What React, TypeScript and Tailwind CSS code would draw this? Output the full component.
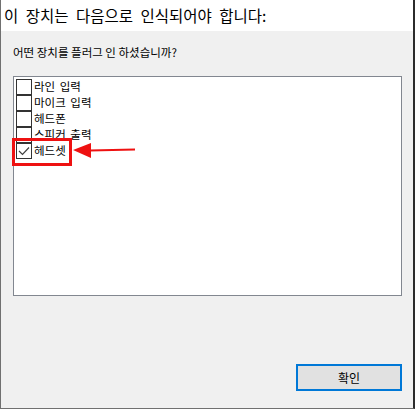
const items = [
  { label: "라인 입력", checked: false },
  { label: "마이크 입력", checked: false },
  { label: "헤드폰", checked: false },
  { label: "스피커 출력", checked: false },
  { label: "헤드셋", checked: true },
];

const font = { fontFamily: '"Noto Sans CJK KR", "Noto Sans", sans-serif' };

function CheckBox({ checked }: { checked: boolean }) {
  return (
    <div className="w-4 h-4 border border-[#333333] bg-white flex items-center justify-center shrink-0">
      {checked && (
        <svg width="12" height="10" viewBox="0 0 12 10">
          <path d="M1 5 L4.5 8.5 L11 1.5" fill="none" stroke="#404040" strokeWidth="1.2" />
        </svg>
      )}
    </div>
  );
}

export default function App() {
  return (
    <div
      className="w-[415px] h-[409px] flex flex-col bg-[#f0f0f0] border-l border-b border-l-[#707070] border-b-[#707070] border-r-2 border-r-[#2b2b2b] text-black"
      style={font}
    >
      {/* Title */}
      <div className="h-[31px] bg-white pl-[3px] flex items-center">
        <span className="text-[15.5px] leading-none [word-spacing:4px]">
          이 장치는 다음으로 인식되어야 합니다:
        </span>
      </div>

      {/* Body */}
      <div className="flex-1 flex flex-col pl-3 pr-[11px] pt-[13px] relative">
        <p className="text-[11.5px] leading-[16px]">
          어떤 장치를 플러그 인 하셨습니까?
        </p>

        <div className="mt-[16px] h-[220px] border border-[#828790] bg-white pt-[2px] pl-[2px]">
          {items.map((it) => (
            <div key={it.label} className="h-4 flex items-center gap-[2px]">
              <CheckBox checked={it.checked} />
              <span className="text-[11.5px] leading-none [word-spacing:2px]">{it.label}</span>
            </div>
          ))}
        </div>

        <div className="flex justify-end mt-[68px]">
          <button className="w-[106px] h-[27px] border-2 border-[#0078d7] bg-[#e1e1e1] text-[12px] leading-none">
            확인
          </button>
        </div>

        {/* Annotation */}
        <div className="absolute left-[11px] top-[107px] w-[60px] h-[28px] border-[3px] border-[#ee1111]" />
        <svg className="absolute left-[71px] top-[111px]" width="64" height="18" viewBox="0 0 64 18">
          <polygon points="1,8 19,1 19,16" fill="#ee1111" />
          <path d="M18 8.5 L63 7.5" stroke="#ee1111" strokeWidth="2.2" />
        </svg>
      </div>
    </div>
  );
}
